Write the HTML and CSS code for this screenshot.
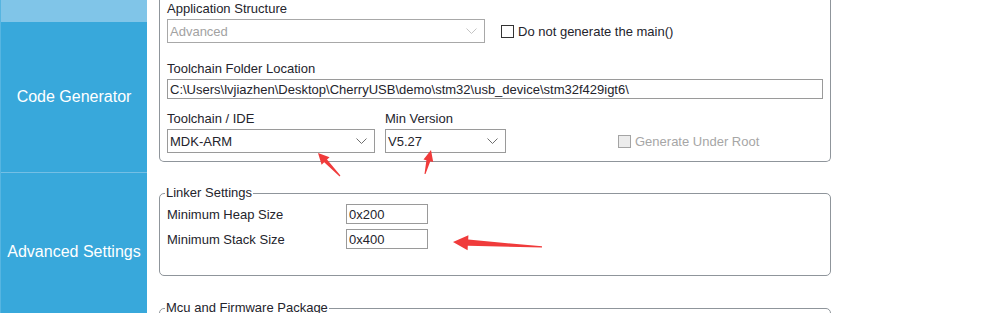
FILE: index.html
```html
<!DOCTYPE html>
<html lang="en">
<head>
    <meta charset="UTF-8">
    <meta name="viewport" content="width=device-width, initial-scale=1.0">
    <title>Project Manager - Code Generator</title>
    <link rel="stylesheet" href="styles.css">
</head>
<body>
    <div class="page">
        <nav class="sidebar">
            <div class="nav-item nav-top"></div>
            <div class="nav-item nav-code">Code Generator</div>
            <div class="nav-item nav-adv">Advanced Settings</div>
        </nav>

        <main class="content">
            <div class="group group-open">
                <div class="field">
                    <label class="caption">Application Structure</label>
                    <div class="row">
                        <div class="select select-disabled w-app">
                            <span>Advanced</span>
                            <svg class="chev" width="11" height="7" viewBox="0 0 11 7"><path d="M0.5 0.5 L5.5 5.5 L10.5 0.5" /></svg>
                        </div>
                        <label class="check check-main"><span class="box"></span>Do not generate the main()</label>
                    </div>
                </div>

                <div class="field field-path">
                    <label class="caption">Toolchain Folder Location</label>
                    <input class="input w-path" type="text" value="C:\Users\lvjiazhen\Desktop\CherryUSB\demo\stm32\usb_device\stm32f429igt6\">
                </div>

                <div class="field field-ide">
                    <div class="row">
                        <div class="col">
                            <label class="caption">Toolchain / IDE</label>
                            <div class="select w-ide">
                                <span>MDK-ARM</span>
                                <svg class="chev" width="11" height="7" viewBox="0 0 11 7"><path d="M0.5 0.5 L5.5 5.5 L10.5 0.5" /></svg>
                            </div>
                        </div>
                        <div class="col col-ver">
                            <label class="caption">Min Version</label>
                            <div class="select w-ver">
                                <span>V5.27</span>
                                <svg class="chev" width="11" height="7" viewBox="0 0 11 7"><path d="M0.5 0.5 L5.5 5.5 L10.5 0.5" /></svg>
                            </div>
                        </div>
                        <label class="check check-disabled check-root"><span class="box"></span>Generate Under Root</label>
                    </div>
                </div>
            </div>

            <fieldset class="group linker">
                <legend>Linker Settings</legend>
                <div class="pair">
                    <span class="pair-label">Minimum Heap Size</span>
                    <input class="input w-hex" type="text" value="0x200">
                </div>
                <div class="pair">
                    <span class="pair-label">Minimum Stack Size</span>
                    <input class="input w-hex" type="text" value="0x400">
                </div>
            </fieldset>

            <fieldset class="group mcu">
                <legend>Mcu and Firmware Package</legend>
            </fieldset>
        </main>

        <!-- red annotation arrows drawn over the screenshot -->
        <svg class="marks" width="984" height="313" viewBox="0 0 984 313">
            <polygon points="340.4,175.6 327,159.6 329.6,157.2 318,153 321.6,164.8 324.2,162.3 339.6,176.4" />
            <polygon points="425.5,174.1 430.3,161.2 433.2,161.9 431,150 423.5,159.5 426.4,160.2 424.5,173.9" />
            <polygon points="542,246.3 468.2,239.6 468.4,235.3 453,242 467.6,250.3 467.8,245.8 542,247.6" />
        </svg>
    </div>
</body>
</html>
```

FILE: styles.css
```css
body {
    margin: 0;
    background: #ffffff;
    font-family: "Liberation Sans", Arial, sans-serif;
    color: #24242c;
    overflow: hidden;
}
.page {
    position: relative;
    display: flex;
    width: 984px;
    height: 313px;
    overflow: hidden;
}
.sidebar {
    width: 147px;
    flex-shrink: 0;
    display: flex;
    flex-direction: column;
    background: #38a8db;
    border-left: 1px solid #56b5e1;
    box-sizing: border-box;
}
.nav-item {
    display: flex;
    flex-shrink: 0;
    align-items: center;
    justify-content: center;
    color: #ffffff;
    font-size: 16px;
}
.nav-top {
    height: 22px;
    background: #80c5e8;
}
.nav-code {
    height: 150px;
    border-bottom: 1px solid #74bfe5;
}
.nav-adv {
    height: 157px;
}
.content {
    margin-left: 12px;
    width: 672px;
}
.group {
    width: 672px;
    box-sizing: border-box;
    border: 1px solid #8f959b;
    border-radius: 5px;
    margin: 0;
}
.group-open {
    border-top: none;
    border-radius: 0 0 5px 5px;
    padding: 2px 7px 8px;
}
.field-path {
    margin-top: 19px;
}
.field-ide {
    margin-top: 13px;
}
.caption {
    display: block;
    font-size: 13px;
    line-height: 14px;
    margin-bottom: 3px;
}
.row {
    display: flex;
    align-items: flex-end;
}
.col-ver {
    margin-left: 10px;
}
.select {
    height: 24px;
    box-sizing: border-box;
    border: 1px solid #9a9a9a;
    background: #ffffff;
    display: flex;
    align-items: center;
    justify-content: space-between;
    padding: 0 7px 0 2px;
    font-size: 13px;
}
.select-disabled {
    color: #a2a2a2;
    border-color: #a8a8a8;
}
.chev path {
    fill: none;
    stroke: #6e6e6e;
    stroke-width: 1;
}
.select-disabled .chev path {
    stroke: #c4c4c4;
}
.w-app { width: 318px; }
.w-ide { width: 208px; }
.w-ver { width: 121px; }
.input {
    display: block;
    height: 20px;
    box-sizing: border-box;
    border: 1px solid #9a9a9a;
    padding: 0 2px;
    margin: 0;
    font-family: "Liberation Sans", Arial, sans-serif;
    font-size: 13px;
    color: #24242c;
    background: #ffffff;
    outline: none;
}
.w-path { width: 656px; }
.w-hex { width: 82px; }
.check {
    display: flex;
    align-items: center;
    height: 24px;
    font-size: 13px;
}
.check .box {
    width: 13px;
    height: 13px;
    box-sizing: border-box;
    border: 1px solid #333333;
    background: #ffffff;
    margin-right: 4px;
}
.check-main {
    margin-left: 16px;
}
.check-root {
    margin-left: 112px;
    color: #a6a6a6;
}
.check-disabled .box {
    border-color: #a4a4a4;
    background: #ececec;
}
fieldset.group {
    padding: 4px 7px 26px;
}
legend {
    font-size: 13px;
    line-height: 14px;
    padding: 0 1px;
    margin-left: -2px;
}
.linker {
    margin-top: 24px;
}
.mcu {
    margin-top: 25px;
    height: 40px;
}
.pair {
    display: flex;
    align-items: center;
    font-size: 13px;
}
.pair + .pair {
    margin-top: 5px;
}
.pair-label {
    width: 179px;
}
.marks {
    position: absolute;
    left: 0;
    top: 0;
    pointer-events: none;
}
.marks polygon {
    fill: #f03b3b;
}
```
